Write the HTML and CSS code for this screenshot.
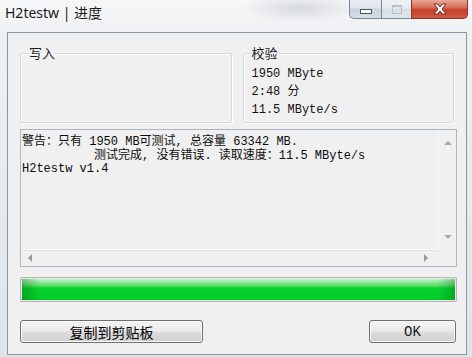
FILE: index.html
```html
<!DOCTYPE html>
<html lang="zh">
<head>
<meta charset="utf-8">
<title>H2testw | 进度</title>
<link rel="stylesheet" href="styles.css">
</head>
<body>
<div class="window">
  <div class="titlebar">
    <span class="title">H2testw | 进度</span>
    <div class="controls">
      <div class="ctl ctl-min"><span class="min-glyph"></span></div>
      <div class="ctl ctl-max"><span class="max-glyph"></span></div>
      <div class="ctl ctl-close">
        <svg width="16" height="12" viewBox="0 0 16 12"><path d="M2 1 L5.5 1 L8 4 L10.5 1 L14 1 L10 6 L14 11 L10.5 11 L8 8 L5.5 11 L2 11 L6 6 Z" fill="#fff" stroke="#6b2a20" stroke-width="1" stroke-linejoin="round"/></svg>
      </div>
    </div>
  </div>
  <div class="client">
    <div class="groups">
      <fieldset class="group"><legend>写入</legend></fieldset>
      <fieldset class="group"><legend>校验</legend>
        <div class="stats">1950 MByte<br>2:48 分<br>11.5 MByte/s</div>
      </fieldset>
    </div>
    <div class="edit">
      <div class="edit-main">
        <pre class="log">警告：只有 1950 MB可测试, 总容量 63342 MB.
          测试完成, 没有错误. 读取速度：11.5 MByte/s
H2testw v1.4</pre>
        <div class="vscroll">
          <span class="arrow arrow-up"></span>
          <span class="arrow arrow-down"></span>
        </div>
      </div>
      <div class="hrow">
        <div class="hscroll">
          <span class="arrow arrow-left"></span>
          <span class="arrow arrow-right"></span>
        </div>
        <div class="corner"></div>
      </div>
    </div>
    <div class="progress"><div class="fill"></div></div>
    <div class="buttons">
      <button class="btn btn-copy">复制到剪贴板</button>
      <button class="btn btn-ok">OK</button>
    </div>
  </div>
</div>
</body>
</html>
```

FILE: styles.css
```css
html, body {
  margin: 0;
  padding: 0;
  background: #e6eaee;
}
.window {
  width: 472px;
  height: 357px;
  display: flex;
  flex-direction: column;
  background:
    radial-gradient(ellipse 60px 14px at 300px 8px, rgba(160,168,176,.35), transparent),
    linear-gradient(to bottom, #f6f7f8 0, #eef1f3 32px, #dfe4e8 100%);
  overflow: hidden;
}
.titlebar {
  height: 32px;
  flex: none;
  display: flex;
  justify-content: space-between;
  align-items: flex-start;
}
.title {
  padding: 4px 0 0 5px;
  font: 14px/18px "Noto Sans", "Noto Sans CJK SC", sans-serif;
  color: #1b1b1b;
}
.controls {
  display: flex;
  margin-right: 4px;
  height: 19px;
}
.ctl {
  height: 19px;
  box-sizing: border-box;
  display: flex;
  align-items: center;
  justify-content: center;
  border: 1px solid #7a8795;
  border-top: none;
}
.ctl-min {
  width: 32px;
  border-radius: 0 0 0 5px;
  border-right: none;
  background: linear-gradient(to bottom, #e9eef3 0, #dfe5ec 45%, #c9d3de 50%, #d6dee7 100%);
}
.ctl-max {
  width: 30px;
  border-right: none;
  background: linear-gradient(to bottom, #eef1f4 0, #e6eaef 45%, #d8dee5 50%, #e0e5ea 100%);
}
.ctl-close {
  width: 57px;
  border-radius: 0 0 5px 0;
  border-color: #7c3b30;
  background: linear-gradient(to bottom, #e8a796 0, #d9705a 40%, #c6402a 55%, #d2583f 100%);
}
.min-glyph {
  width: 10px;
  height: 3px;
  margin-top: 4px;
  background: #fff;
  border: 1px solid #4a5562;
}
.max-glyph {
  width: 8px;
  height: 6px;
  border: 1px solid #b7c1cb;
  border-top-width: 2px;
}
.client {
  flex: 1;
  margin: 0 5px 2px 7px;
  border: 1px solid #8b97a3;
  background: #f0f0f0;
  padding: 0 9px 0 12px;
  display: flex;
  flex-direction: column;
}
.groups {
  display: flex;
  gap: 11px;
  margin: 12px 3px 0 0;
}
.group {
  flex: 1;
  margin: 0;
  padding: 0 8px;
  height: 78px;
  box-sizing: border-box;
  border: 1px solid #d5d9dd;
  box-shadow: inset 1px 1px 0 #fff, 1px 1px 0 #fff;
  border-radius: 2px;
  min-width: 0;
}
.group legend {
  padding: 0;
  font: 13px/16px "Noto Sans CJK SC", sans-serif;
  color: #1e1e1e;
}
.stats {
  margin-top: 4px;
  font: 12px/18px "Liberation Mono", "Noto Sans CJK SC", monospace;
  color: #111;
}
.edit {
  margin-top: 6px;
  height: 138px;
  box-sizing: border-box;
  border: 1px solid #aab6c4;
  display: flex;
  flex-direction: column;
  background: #f0f0f0;
}
.edit-main {
  flex: 1;
  display: flex;
  min-height: 0;
}
.log {
  flex: 1;
  margin: 0;
  padding: 6px 1px 0;
  font: 12px/13.5px "Liberation Mono", "Noto Sans CJK SC", monospace;
  color: #0c0c0c;
  white-space: pre;
  overflow: hidden;
}
.vscroll {
  width: 17px;
  flex: none;
  display: flex;
  flex-direction: column;
  justify-content: space-between;
  align-items: center;
  padding: 11px 0 10px;
  border-left: 1px solid #f8f8f8;
  background: #f0f0f0;
}
.hrow {
  height: 17px;
  flex: none;
  display: flex;
}
.hscroll {
  flex: 1;
  display: flex;
  justify-content: space-between;
  align-items: center;
  padding: 0 11px 0 7px;
  border-top: 1px solid #fafafa;
  box-shadow: inset 0 1px 0 #e4e4e4;
}
.corner {
  width: 17px;
  background: #f0f0f0;
}
.arrow {
  width: 0;
  height: 0;
  border: 4px solid transparent;
}
.arrow-up { border-bottom-color: #a8a8a8; border-top-width: 0; }
.arrow-down { border-top-color: #a8a8a8; border-bottom-width: 0; }
.arrow-left { border-right-color: #9a9a9a; border-left-width: 0; }
.arrow-right { border-left-color: #9a9a9a; border-right-width: 0; }
.progress {
  margin-top: 10px;
  height: 25px;
  box-sizing: border-box;
  border: 1px solid #b5b5b5;
  border-radius: 2px;
  padding: 1px;
  background: #e8e8e8;
}
.fill {
  height: 100%;
  background:
    linear-gradient(to right, rgba(0,90,25,.35), rgba(0,90,25,0) 18px, rgba(0,90,25,0) calc(100% - 18px), rgba(0,90,25,.3)),
    linear-gradient(to bottom, #c6f4c9 0, #93e99b 3px, #53dd63 7px, #08d22e 9px, #00cd28 100%);
}
.buttons {
  display: flex;
  justify-content: space-between;
  margin-top: 18px;
}
.btn {
  height: 23px;
  box-sizing: border-box;
  border: 1px solid #707070;
  border-radius: 3px;
  background: linear-gradient(to bottom, #f3f3f3 0, #ebebeb 48%, #dddddd 52%, #cfcfcf 100%);
  box-shadow: inset 0 0 0 1px #fbfbfb;
  color: #000;
  padding: 0;
}
.btn-copy {
  width: 183px;
  font: 14px/20px "Noto Sans CJK SC", sans-serif;
}
.btn-ok {
  width: 87px;
  margin-right: 1px;
  font: 14px/20px "Liberation Mono", monospace;
  color: #1a1a1a;
}
```
